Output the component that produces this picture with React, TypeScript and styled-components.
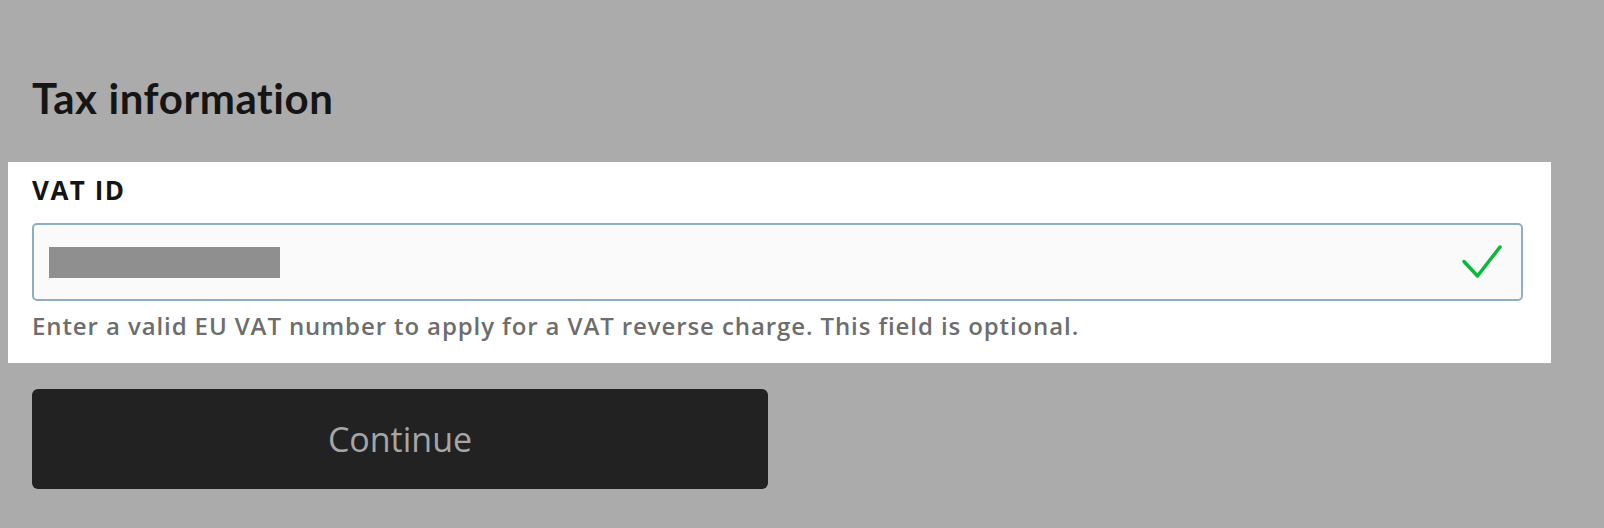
import styled, { createGlobalStyle } from "styled-components";

const GlobalStyle = createGlobalStyle`
  html, body {
    margin: 0;
    padding: 0;
    background: #ababab;
  }
  body {
    font-family: "Open Sans", Lato, Arial, sans-serif;
    color: #151515;
  }
`;

const Page = styled.div`
  width: 1604px;
  height: 528px;
  box-sizing: border-box;
  padding: 72px 0 0 32px;
  overflow: hidden;
`;

const Title = styled.h1`
  margin: 0;
  font-family: Lato, "Open Sans", Arial, sans-serif;
  font-size: 42px;
  font-weight: 700;
  letter-spacing: 0.6px;
  line-height: 52px;
  color: #151515;
`;

const FieldPanel = styled.section`
  margin: 38px 0 0 -24px;
  width: 1543px;
  box-sizing: border-box;
  background: #ffffff;
  padding: 12px 28px 22px 24px;
  display: flex;
  flex-direction: column;
`;

const Label = styled.label`
  font-size: 26px;
  font-weight: 700;
  letter-spacing: 1.5px;
  line-height: 32px;
  color: #151515;
`;

const InputBox = styled.div`
  margin-top: 17px;
  height: 78px;
  box-sizing: border-box;
  border: 2px solid #8eaec8;
  border-radius: 5px;
  background: #fafafa;
  display: flex;
  align-items: center;
  justify-content: space-between;
  padding: 0 18px 0 15px;
`;

const Redacted = styled.div`
  width: 231px;
  height: 31px;
  background: #8f8f8f;
`;

const Hint = styled.p`
  margin: 10px 0 0;
  font-size: 24px;
  font-weight: 600;
  letter-spacing: 0.9px;
  line-height: 30px;
  color: #6d6d6d;
  white-space: nowrap;
`;

const Button = styled.button`
  margin-top: 26px;
  width: 736px;
  height: 100px;
  border: 0;
  border-radius: 6px;
  background: #222222;
  color: #a6a6a6;
  font-family: "Open Sans", Lato, Arial, sans-serif;
  font-size: 34px;
  cursor: pointer;
`;

function CheckIcon() {
  return (
    <svg width="42" height="36" viewBox="0 0 42 36" fill="none">
      <polyline
        points="3,17.5 16.5,32 39,3"
        stroke="#0db73b"
        strokeWidth="3.5"
        strokeLinecap="round"
        strokeLinejoin="round"
      />
    </svg>
  );
}

export default function App() {
  return (
    <>
      <GlobalStyle />
      <Page>
        <Title>Tax information</Title>
        <FieldPanel>
          <Label>VAT ID</Label>
          <InputBox>
            <Redacted />
            <CheckIcon />
          </InputBox>
          <Hint>
            Enter a valid EU VAT number to apply for a VAT reverse charge. This
            field is optional.
          </Hint>
        </FieldPanel>
        <Button>Continue</Button>
      </Page>
    </>
  );
}
